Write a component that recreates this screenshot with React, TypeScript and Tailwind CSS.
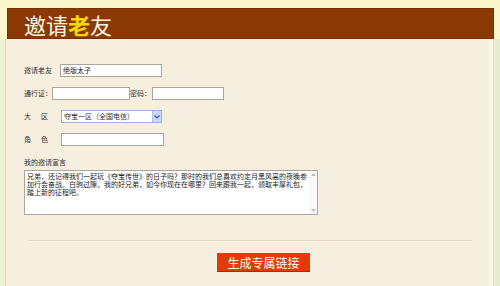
import React from 'react';

const font = { fontFamily: '"Noto Sans CJK SC", "Noto Sans", sans-serif' };

const Field: React.FC<{ className: string; value?: string }> = ({ className, value }) => (
    <div className={`h-[13px] bg-white border border-[#aaa69a] text-[7px] leading-[11px] pl-[2px] text-[#222] ${className}`}>
        {value}
    </div>
);

export default function App() {
    return (
        <div className="w-[500px] h-[286px] overflow-hidden bg-[#fcf6cc] flex flex-col text-[#333]" style={font}>
            <div className="h-[39px] pt-[8px] pl-[7px] pr-[6px]">
                <div className="h-[31px] bg-[#8a3904] border border-[#7a2f00] pl-[16px] flex items-center">
                    <span className="text-[22px] leading-none text-[#fdf4e4] tracking-[0px]">
                        邀请<span className="text-[#ffd800] font-bold">老</span>友
                    </span>
                </div>
            </div>
            <div className="flex flex-1">
                <div className="w-[5px] bg-[#ecf0d5]" />
                <div className="w-[1px] bg-[#dcdcba]" />
                <div className="flex-1 bg-[#f6efdf] pl-[18px] flex flex-col">
                    <div className="mt-[25px] flex items-center h-[13px]">
                        <span className="text-[7px] w-[36px]">邀请老友</span>
                        <Field className="w-[102px]" value="绝版太子" />
                    </div>
                    <div className="mt-[10px] flex items-center h-[13px]">
                        <span className="text-[7px] w-[28px]">通行证：</span>
                        <Field className="w-[78px]" />
                        <span className="text-[7px] w-[22px]">密码：</span>
                        <Field className="w-[72px]" />
                    </div>
                    <div className="mt-[10px] flex items-center h-[13px]">
                        <span className="text-[7px] w-[37px] flex justify-between pr-[13px]"><span>大</span><span>区</span></span>
                        <div className="w-[101px] h-[13px] bg-white border border-[#9fb5d8] flex items-center text-[7px] pl-[2px]">
                            <span className="flex-1">夺宝一区（全国电信）</span>
                            <span className="w-[9px] h-[11px] bg-[#c8d7f4] border-l border-[#b0c4ea] flex items-center justify-center">
                                <svg width="6" height="4" viewBox="0 0 6 4"><path d="M0.5 0.5 L3 3 L5.5 0.5" stroke="#3a5aa8" strokeWidth="1.2" fill="none" /></svg>
                            </span>
                        </div>
                    </div>
                    <div className="mt-[10px] flex items-center h-[13px]">
                        <span className="text-[7px] w-[37px] flex justify-between pr-[13px]"><span>角</span><span>色</span></span>
                        <Field className="w-[103px]" />
                    </div>
                    <div className="mt-[12px] text-[7px] leading-[9px]">我的邀请宣言</div>
                    <div className="mt-[3px] w-[294px] h-[45px] bg-white border border-[#aaa69a] flex">
                        <div className="flex-1 text-[7px] leading-[8px] pl-[2px] pt-[1px] text-[#222]">
                            兄弟，还记得我们一起玩《夺宝传世》的日子吗？那时的我们总喜欢约定月黑风高的夜晚参加行会奋战。白驹过隙，我的好兄弟，如今你现在在哪里？回来跟我一起，领取丰厚礼包，踏上新的征程吧。
                        </div>
                        <div className="w-[8px] bg-[#f8f8f8] flex flex-col justify-between items-center py-[2px]">
                            <svg width="5" height="3" viewBox="0 0 5 3"><path d="M0 3 L2.5 0 L5 3 Z" fill="#c0c0c0" /></svg>
                            <svg width="5" height="3" viewBox="0 0 5 3"><path d="M0 0 L2.5 3 L5 0 Z" fill="#c0c0c0" /></svg>
                        </div>
                    </div>
                    <div className="mt-[25px] mr-[17px] ml-[3px] h-[2px] border-t border-[#e6dcc6] bg-[#faf5e8]" />
                    <div className="mt-[11px] ml-[193px] w-[93px] h-[19px] bg-[#e23c06] border-b border-[#b02800] text-white text-[12px] leading-[19px] text-center">
                        生成专属链接
                    </div>
                </div>
                <div className="w-[4px] bg-[#faf6e6]" />
                <div className="w-[1px] bg-[#e2dfc4]" />
                <div className="w-[6px] bg-[#e9edd0]" />
            </div>
        </div>
    );
}
